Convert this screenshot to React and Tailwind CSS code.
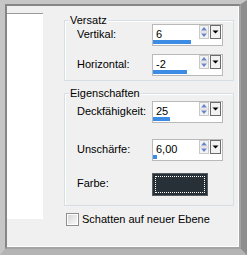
function Arrows() {
  return (
    <svg width="10" height="14" viewBox="0 0 10 14" className="block">
      <rect x="0.5" y="0.5" width="9" height="13" fill="#f3f3f3" stroke="#c9c9c9" />
      <line x1="1" y1="7" x2="9" y2="7" stroke="#d6d6d6" />
      <path d="M5 2 L8 5.5 L2 5.5 Z" fill="#6a86c9" />
      <path d="M5 12 L8 8.5 L2 8.5 Z" fill="#6a86c9" />
    </svg>
  );
}

function Drop() {
  return (
    <svg width="11" height="14" viewBox="0 0 11 14" className="block">
      <rect x="0.5" y="0.5" width="10" height="13" fill="#f2f2f2" stroke="#6b6b6b" />
      <path d="M2.5 5.5 H8.5 L5.5 8.5 Z" fill="#000" />
    </svg>
  );
}

function Spin({ value, bar }) {
  return (
    <div className="w-[71px] h-[22px] border border-[#b9b9b9] bg-white flex flex-col">
      <div className="flex h-[15px]">
        <div className="w-[46px] pl-[3px] pt-[2px] text-[11px] leading-[15px] text-black">{value}</div>
        <Arrows />
        <div className="w-[1px]" />
        <Drop />
      </div>
      <div className="h-[4px] bg-[#3c8ce6]" style={{ width: bar }} />
    </div>
  );
}

function Row({ label, children, className = "" }) {
  return (
    <div className={"flex items-start " + className}>
      <div className="w-[87px] pl-[12px] pt-[3px] text-[11px] leading-[15px] text-black">{label}</div>
      {children}
    </div>
  );
}

function Group({ title, className = "", children }) {
  return (
    <div
      className={
        "relative w-[170px] border border-[#d5dfe5] shadow-[inset_1px_1px_0_#ffffff] " + className
      }
    >
      <div className="absolute left-[4px] top-[-7px] px-[1px] bg-[#f0f0f0] text-[11px] leading-[13px] text-black">
        {title}
      </div>
      {children}
    </div>
  );
}

export default function App() {
  return (
    <div className="w-[247px] h-[255px] flex font-['Liberation_Sans',Arial,sans-serif] border-t-[4px] border-l-[5px] border-r-[6px] border-b-[6px] border-t-[#c6c6c6] border-l-[#c6c6c6] border-r-[#8e8e8e] border-b-[#b4b4b4]">
      <div className="flex-1 flex border-t-2 border-l-2 border-r-2 border-b-2 border-t-[#868686] border-l-[#868686] border-r-[#a3a3a3] border-b-[#a3a3a3]">
        <div className="flex-1 flex bg-[#f0f0f0] border-r border-b border-r-white border-b-white">
          <div className="mt-[7px] w-[36px] h-[206px] bg-white border-t border-[#9a9a9a]" />
          <div className="ml-[21px] pt-[14px] flex flex-col">
            <Group title="Versatz" className="h-[61px] pt-[3px]">
              <Row label="Vertikal:">
                <Spin value="6" bar={38} />
              </Row>
              <Row label="Horizontal:" className="mt-[8px]">
                <Spin value="-2" bar={34} />
              </Row>
            </Group>
            <Group title="Eigenschaften" className="mt-[12px] h-[113px] pt-[7px]">
              <Row label="Deckfähigkeit:">
                <Spin value="25" bar={17} />
              </Row>
              <Row label="Unschärfe:" className="mt-[16px]">
                <Spin value="6,00" bar={4} />
              </Row>
              <Row label="Farbe:" className="mt-[12px]">
                <div className="w-[56px] h-[23px] bg-[#263036] border border-[#555d62] p-[2px]">
                  <div className="w-full h-full border border-dotted border-white" />
                </div>
              </Row>
            </Group>
            <div className="mt-[6px] flex items-center">
              <div className="ml-[2px] w-[13px] h-[13px] border border-[#8e8f8f] p-[1px] bg-white">
                <div className="w-full h-full bg-gradient-to-br from-[#d8d8d8] to-[#f8f8f8]" />
              </div>
              <div className="ml-[3px] text-[11px] leading-[15px] text-black">Schatten auf neuer Ebene</div>
            </div>
          </div>
        </div>
      </div>
    </div>
  );
}
